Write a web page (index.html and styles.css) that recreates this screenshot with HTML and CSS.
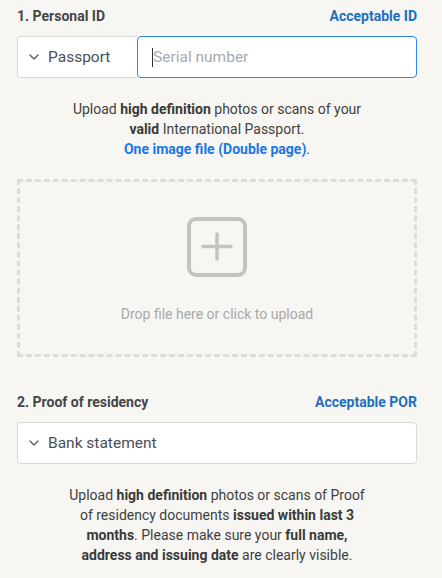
FILE: index.html
```html
<!DOCTYPE html>
<html>
<head>
<meta charset="utf-8">
<link rel="stylesheet" href="styles.css">
</head>
<body>
<div class="page">
  <div class="section-head">
    <span class="section-title">1. Personal ID</span>
    <a class="section-link">Acceptable ID</a>
  </div>
  <div class="id-row">
    <div class="select select-doc">
      <svg class="chev" width="10" height="6" viewBox="0 0 10 6"><path d="M1 1 L5 5 L9 1" fill="none" stroke="#5f6670" stroke-width="1.5" stroke-linecap="round" stroke-linejoin="round"/></svg>
      <span>Passport</span>
    </div>
    <div class="serial"><span class="caret"></span><span class="placeholder">Serial number</span></div>
  </div>
  <p class="note">Upload <b>high definition</b> photos or scans of your<br><b>valid</b> International Passport.<br><span class="blue">One image file (Double page)</span>.</p>
  <div class="drop">
    <svg class="plus" width="62" height="62" viewBox="0 0 62 62"><rect x="3" y="3" width="56" height="56" rx="7" fill="none" stroke="#c3c4c2" stroke-width="4"/><path d="M31 18 V43 M17 30.5 H45" stroke="#c3c4c2" stroke-width="3.5" stroke-linecap="round"/></svg>
    <div class="drop-text">Drop file here or click to upload</div>
  </div>
  <div class="section-head second">
    <span class="section-title">2. Proof of residency</span>
    <a class="section-link">Acceptable POR</a>
  </div>
  <div class="select select-full">
    <svg class="chev" width="10" height="6" viewBox="0 0 10 6"><path d="M1 1 L5 5 L9 1" fill="none" stroke="#5f6670" stroke-width="1.5" stroke-linecap="round" stroke-linejoin="round"/></svg>
    <span>Bank statement</span>
  </div>
  <p class="note">Upload <b>high definition</b> photos or scans of Proof<br>of residency documents <b>issued within last 3</b><br><b>months</b>. Please make sure your <b>full name,</b><br><b>address and issuing date</b> are clearly visible.</p>
</div>
</body>
</html>
```
FILE: styles.css
```css
html, body {
  margin: 0;
  padding: 0;
  background: #f7f6f2;
}
body {
  font-family: Roboto, "Liberation Sans", sans-serif;
  color: #3d3d3d;
}
.page {
  padding: 6px 25px 0 17px;
}
.section-head {
  display: flex;
  justify-content: space-between;
  align-items: center;
  height: 20px;
  line-height: 20px;
  font-size: 14px;
  font-weight: 700;
}
.section-head.second {
  margin-top: 35px;
}
.section-title {
  color: #444548;
}
.section-link {
  color: #1f6fbf;
}
.id-row {
  display: flex;
  margin-top: 10px;
  height: 42px;
}
.select {
  display: flex;
  align-items: center;
  box-sizing: border-box;
  height: 42px;
  background: #fff;
  border: 1px solid #d8d8d6;
  border-radius: 4px;
  font-size: 15.5px;
  color: #4a4f56;
  padding-left: 11px;
}
.chev {
  margin-right: 9px;
}
.select-doc {
  width: 120px;
  border-right: none;
  border-radius: 4px 0 0 4px;
}
.serial {
  flex: 1;
  display: flex;
  align-items: center;
  box-sizing: border-box;
  height: 42px;
  background: #fff;
  border: 1px solid #2a87ec;
  border-radius: 4px;
  padding-left: 14px;
  font-size: 15.5px;
}
.caret {
  width: 1px;
  height: 19px;
  background: #333;
}
.placeholder {
  color: #a3abb2;
}
.note {
  margin: 21px 0 0;
  text-align: center;
  font-size: 14px;
  line-height: 20px;
  color: #3f3f3f;
}
.note b {
  color: #3a3a3a;
}
.blue {
  color: #1977e6;
  font-weight: 700;
}
.drop {
  margin-top: 20px;
  box-sizing: border-box;
  height: 178px;
  border: 3px dashed #dcdcdb;
  display: flex;
  flex-direction: column;
  align-items: center;
  padding-top: 34px;
}
.drop-text {
  margin-top: 26px;
  font-size: 14px;
  line-height: 20px;
  color: #a9a9a7;
}
.select-full {
  margin-top: 10px;
}
```
